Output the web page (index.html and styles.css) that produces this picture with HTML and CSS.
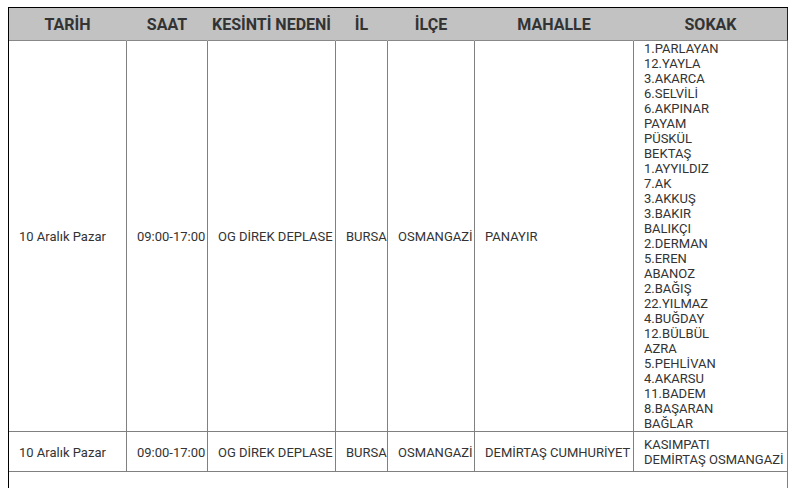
FILE: index.html
```html
<!DOCTYPE html>
<html lang="tr">
<head>
<meta charset="utf-8">
<link rel="stylesheet" href="styles.css">
</head>
<body>
<table class="outage">
  <colgroup>
    <col class="c1"><col class="c2"><col class="c3"><col class="c4"><col class="c5"><col class="c6"><col class="c7">
  </colgroup>
  <thead>
    <tr>
      <th>TARİH</th><th>SAAT</th><th>KESİNTİ NEDENİ</th><th>İL</th><th>İLÇE</th><th>MAHALLE</th><th class="last">SOKAK</th>
    </tr>
  </thead>
  <tbody>
    <tr class="big">
      <td>10 Aralık Pazar</td>
      <td>09:00-17:00</td>
      <td>OG DİREK DEPLASE</td>
      <td>BURSA</td>
      <td>OSMANGAZİ</td>
      <td>PANAYIR</td>
      <td>1.PARLAYAN<br>12.YAYLA<br>3.AKARCA<br>6.SELVİLİ<br>6.AKPINAR<br>PAYAM<br>PÜSKÜL<br>BEKTAŞ<br>1.AYYILDIZ<br>7.AK<br>3.AKKUŞ<br>3.BAKIR<br>BALIKÇI<br>2.DERMAN<br>5.EREN<br>ABANOZ<br>2.BAĞIŞ<br>22.YILMAZ<br>4.BUĞDAY<br>12.BÜLBÜL<br>AZRA<br>5.PEHLİVAN<br>4.AKARSU<br>11.BADEM<br>8.BAŞARAN<br>BAĞLAR</td>
    </tr>
    <tr class="small">
      <td>10 Aralık Pazar</td>
      <td>09:00-17:00</td>
      <td>OG DİREK DEPLASE</td>
      <td>BURSA</td>
      <td>OSMANGAZİ</td>
      <td>DEMİRTAŞ CUMHURİYET</td>
      <td>KASIMPATI<br>DEMİRTAŞ OSMANGAZİ</td>
    </tr>
    <tr class="empty">
      <td colspan="7"></td>
    </tr>
  </tbody>
</table>
</body>
</html>
```

FILE: styles.css
```css
html, body {
  background: #ffffff;
}
body {
  margin: 7px 0 0 8px;
  font-family: Roboto, "Liberation Sans", Arial, sans-serif;
  color: #333333;
}
.outage {
  border-collapse: separate;
  border-spacing: 0;
  table-layout: fixed;
  width: 780px;
  border-top: 1px solid #000000;
  border-left: 1px solid #000000;
}
.c1 { width: 118px; }
.c2 { width: 81px; }
.c3 { width: 128px; }
.c4 { width: 52px; }
.c5 { width: 87px; }
.c6 { width: 159px; }
.c7 { width: 154px; }

.outage th {
  background: #c2c2c2;
  height: 32px;
  padding: 0;
  font-size: 16px;
  font-weight: 700;
  text-align: center;
  white-space: nowrap;
  border-bottom: 1px solid #888888;
  border-right: 1px solid #c2c2c2;
  box-sizing: content-box;
}
.outage th.last {
  border-right: 1px solid #222222;
}
.outage td {
  font-size: 13px;
  line-height: 15px;
  padding: 0 0 0 10px;
  text-align: left;
  vertical-align: middle;
  white-space: nowrap;
  border-right: 1px solid #808080;
  border-bottom: 1px solid #808080;
}
.outage tr.small td {
  padding-top: 5px;
  padding-bottom: 4px;
}
.outage tr.empty td {
  height: 40px;
  border-bottom: none;
}
```
